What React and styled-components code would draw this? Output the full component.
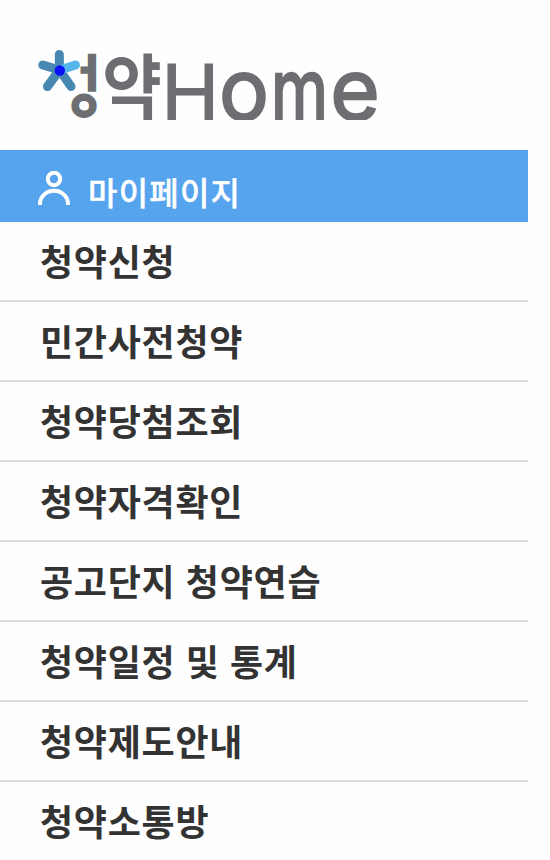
import React from 'react';
import styled, { createGlobalStyle } from 'styled-components'

const menus = [
    '청약신청',
    '민간사전청약',
    '청약당첨조회',
    '청약자격확인',
    '공고단지 청약연습',
    '청약일정 및 통계',
    '청약제도안내',
    '청약소통방',
]

// x, y: baseline centre of the letter, w, h: stretch, bold: extra outline
const letters = [
    { char: 'ㅓ', x: 50.5, y: 36.5, size: 38, w: 1, h: 0.98, bold: 3.2, kr: true },
    { char: 'ㅇ', x: 46, y: 71, size: 38, w: 1, h: 1.04, bold: 2.8, kr: true },
    { char: '약', x: 94, y: 63.5, size: 72, w: 0.9, h: 1, bold: 0, kr: true },
    { char: 'H', x: 152.2, y: 71, size: 78, w: 1, h: 1, bold: 1.2 },
    { char: 'o', x: 206, y: 69.5, size: 85, w: 0.98, h: 1, bold: 2 },
    { char: 'm', x: 261.5, y: 72, size: 88, w: 0.74, h: 1, bold: 2.6 },
    { char: 'e', x: 317, y: 69.5, size: 85, w: 1, h: 1, bold: 2 },
]

function Logo() {
    return (
        <LogoSvg viewBox="0 0 340 70" role="img" aria-label="청약Home">
            {letters.map(({ char, x, y, size, w, h, bold, kr }) => (
                <Letter
                    key={char}
                    $kr={kr}
                    fontSize={size}
                    strokeWidth={bold}
                    textAnchor="middle"
                    transform={`translate(${x} ${y}) scale(${w} ${h})`}
                >
                    {char}
                </Letter>
            ))}
            <g strokeWidth="9" strokeLinecap="round" stroke="#4788b2">
                <line x1="21.5" y1="20" x2="21.3" y2="4.5" />
                <line x1="21.5" y1="20" x2="4.8" y2="15" />
                <line x1="21.5" y1="20" x2="9.5" y2="36.5" />
                <line x1="21.5" y1="20" x2="33" y2="36.5" />
                <line x1="25" y1="19" x2="37.5" y2="15" stroke="#55b6ec" />
            </g>
            <circle cx="21.8" cy="20.5" r="5.2" fill="#0a12f5" />
        </LogoSvg>
    );
}

function App() {
    return (
        <>
            <GlobalStyle />
            <Container>
                <Header>
                    <Logo />
                </Header>
                <MyPage href="#">
                    <PersonIcon viewBox="0 0 32 35">
                        <circle cx="16" cy="8" r="6.2" />
                        <path d="M2 34v-1a14 13.2 0 0 1 28 0v1" />
                    </PersonIcon>
                    <span>마이페이지</span>
                </MyPage>
                <MenuList>
                    {menus.map((menu) => (
                        <MenuItem key={menu}>
                            <a href="#">{menu}</a>
                        </MenuItem>
                    ))}
                </MenuList>
            </Container>
        </>
    );
}

const GlobalStyle = createGlobalStyle`
    * {
        box-sizing: border-box;
    }

    body {
        margin: 0;
        background-color: #fefefe;
        font-family: 'Noto Sans CJK KR', sans-serif;
    }

    a {
        color: inherit;
        text-decoration: none;
    }
`

const Container = styled.div`
    width: 528px;
    height: 860px;
    overflow: hidden;
`

const Header = styled.header`
    height: 150px;
    padding: 50px 38px 0;
`

const LogoSvg = styled.svg`
    display: block;
    width: 340px;
    height: 70px;
    overflow: hidden;
`

const Letter = styled.text`
    fill: #6d6e72;
    stroke: #6d6e72;
    font-family: ${({ $kr }) => $kr ? "'Noto Sans CJK KR'" : "'Inter'"}, sans-serif;
    font-weight: ${({ $kr }) => $kr ? 700 : 400};
`

const MyPage = styled.a`
    display: flex;
    align-items: flex-start;
    height: 72px;
    padding: 21px 38px 0;
    background-color: #56a3ee;

    span {
        margin-left: 18px;
        color: #fff;
        font-size: 32px;
        font-weight: 500;
        line-height: 41px;
        letter-spacing: 1.2px;
        -webkit-text-stroke: 0.4px #fff;
    }
`

const PersonIcon = styled.svg`
    width: 32px;
    height: 35px;
    fill: none;
    stroke: #fff;
    stroke-width: 4;
`

const MenuList = styled.ul`
    margin: 0;
    padding: 0;
    list-style: none;
`

const MenuItem = styled.li`
    height: 80px;
    padding-left: 40px;
    border-bottom: 2px solid #dcdcdc;
    color: #333;
    font-size: 36px;
    font-weight: 700;
    line-height: 77px;
    letter-spacing: 0.75px;
    word-spacing: 1.4px;
    white-space: nowrap;
`

export default App;
